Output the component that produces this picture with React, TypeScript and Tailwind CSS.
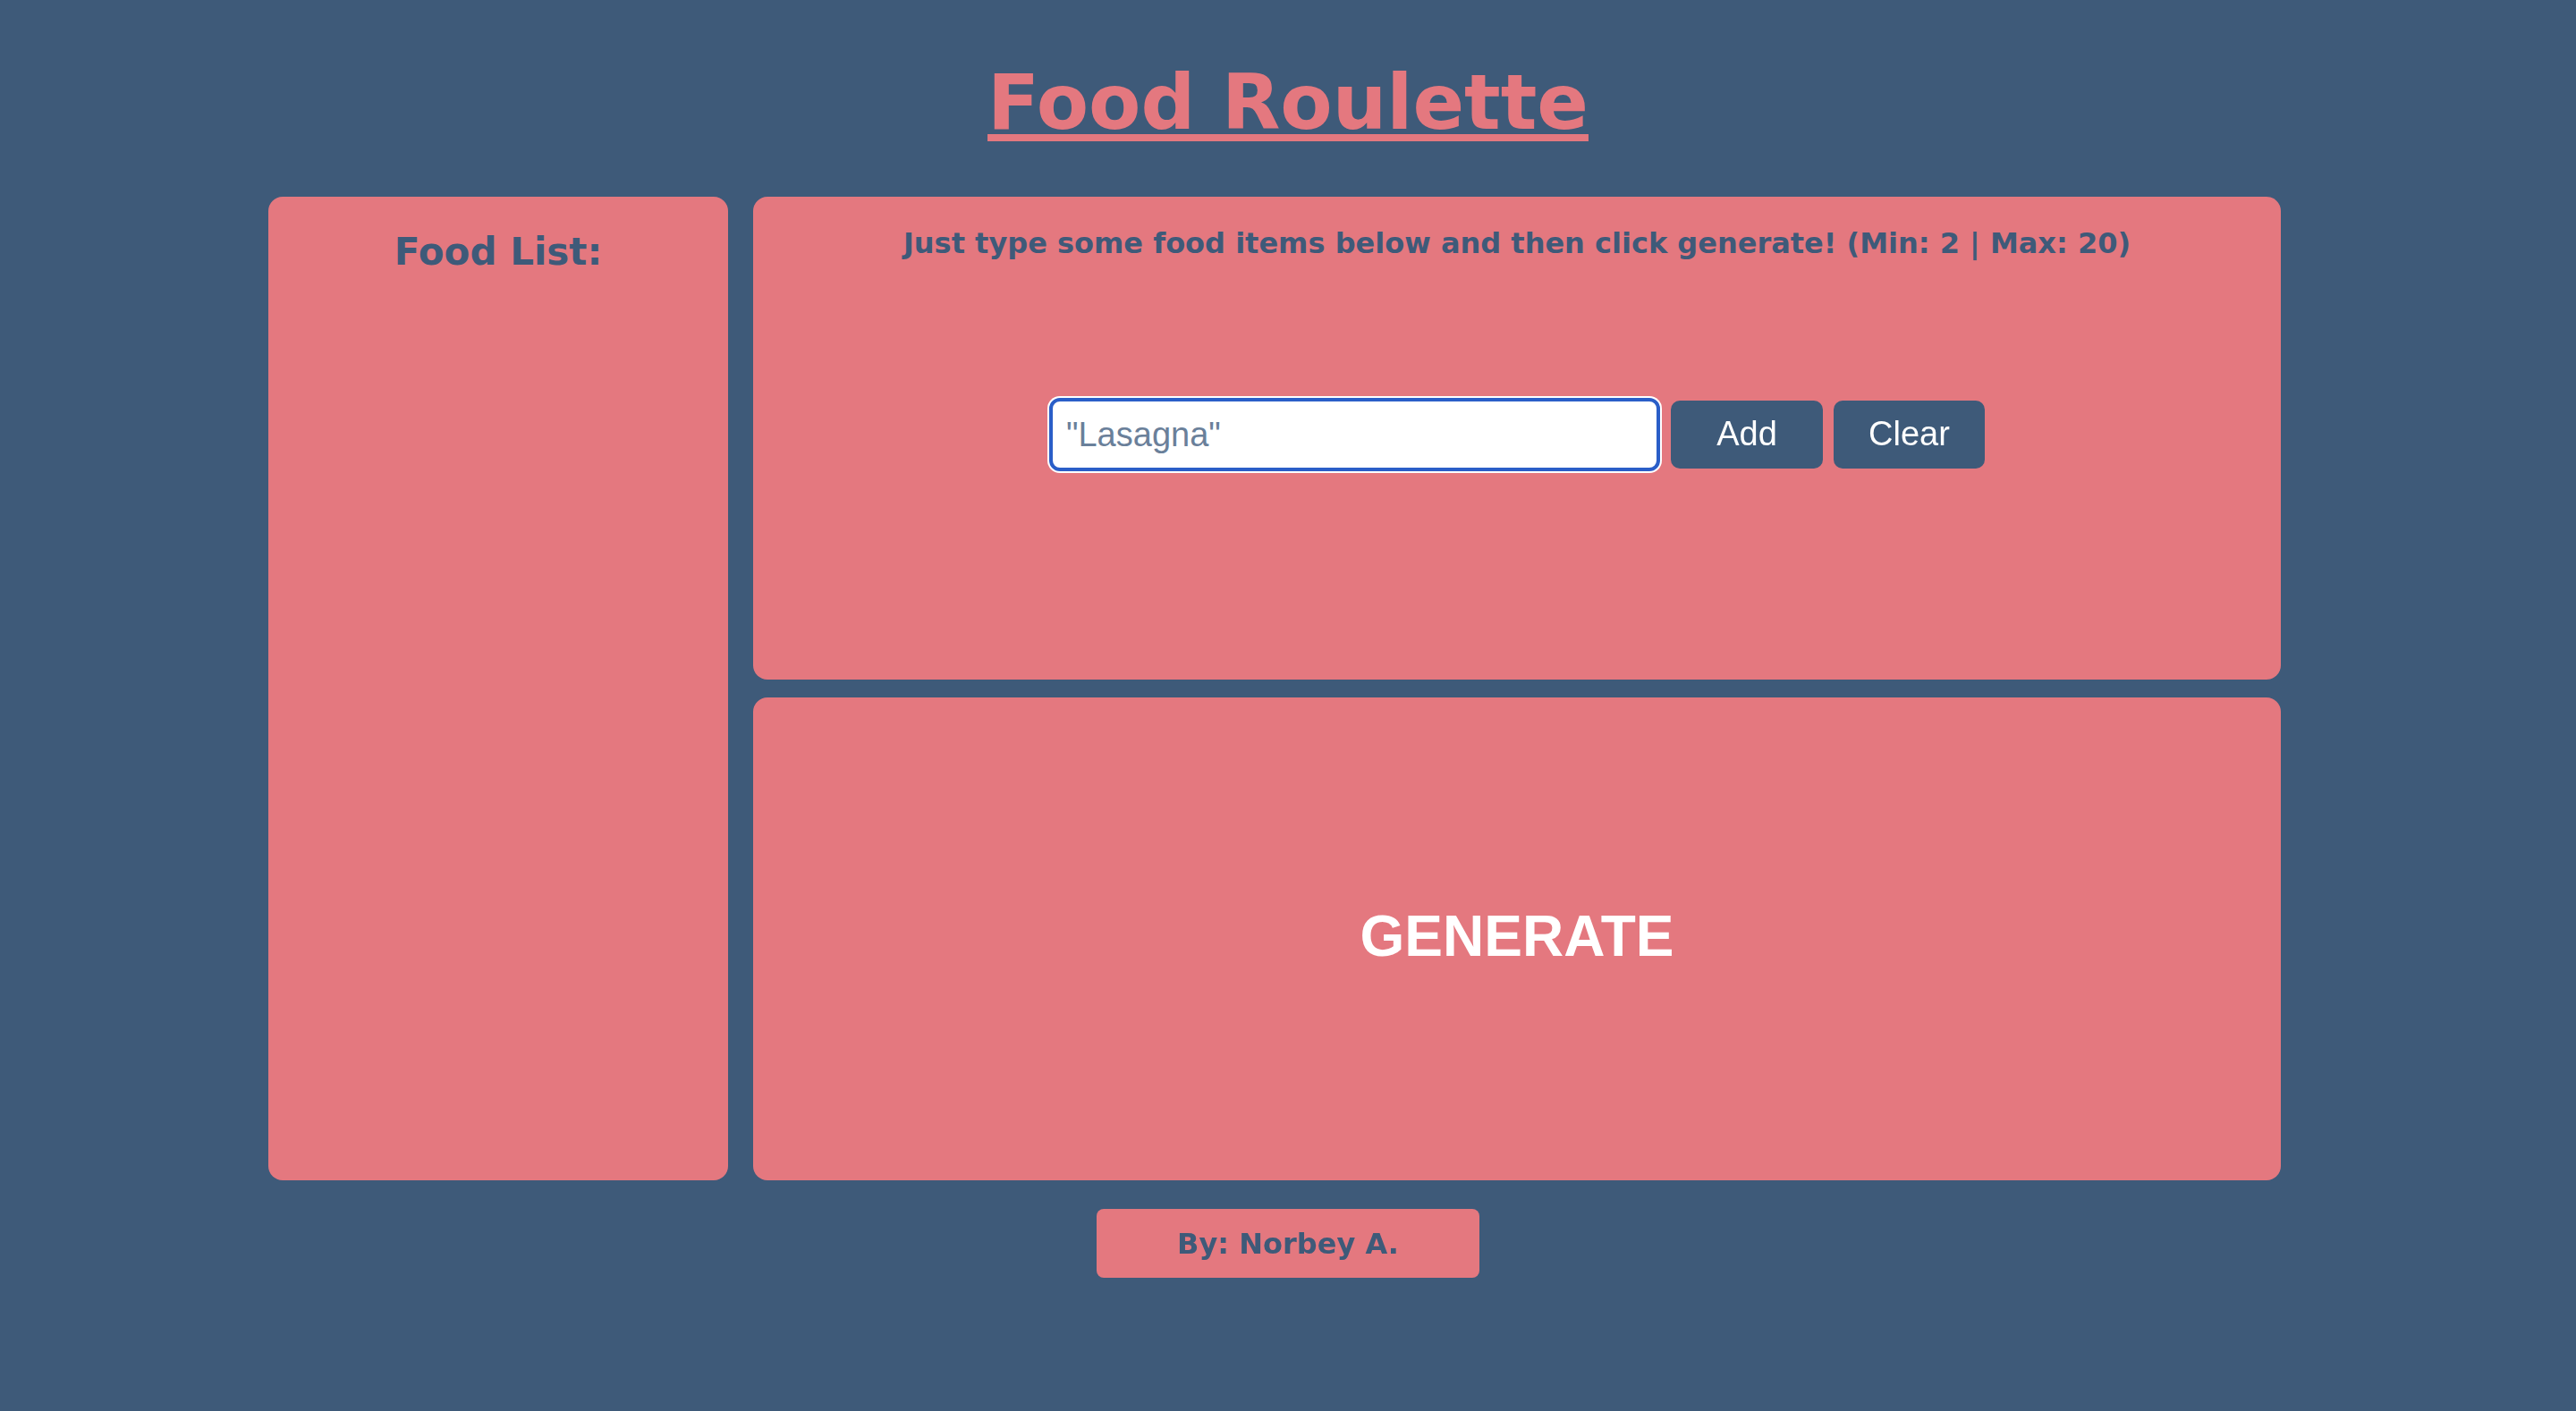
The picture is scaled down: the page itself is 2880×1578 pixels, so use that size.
import React, { useState } from "react";

const FoodRoulette = () => {
  const [food, setFood] = useState("");
  const [items, setItems] = useState<string[]>([]);
  const [picked, setPicked] = useState<string | null>(null);

  const addItem = () => {
    if (!food.trim() || items.length >= 20) return;
    setItems([...items, food.trim()]);
    setFood("");
  };

  const clearItems = () => {
    setItems([]);
    setPicked(null);
  };

  const generate = () => {
    if (items.length < 2) return;
    setPicked(items[Math.floor(Math.random() * items.length)]);
  };

  return (
    <div className="min-h-screen w-full bg-[#3e5a79] pt-[64px] font-['DejaVu_Sans',Verdana,sans-serif]">
      {/* Title */}
      <h1 className="text-center text-[85px] leading-[102px] font-bold text-[#e4787f] underline decoration-8 underline-offset-[6px]">
        Food Roulette
      </h1>

      {/* Main panels */}
      <div className="mt-[54px] ml-[300px] w-[2250px] flex gap-[28px]">
        <div className="w-[514px] h-[1100px] shrink-0 rounded-[16px] bg-[#e4787f] pt-[41px]">
          <h2 className="text-center text-[42px] leading-none font-bold text-[#3e5a79]">
            Food List:
          </h2>
          <ul className="mt-6 px-8 text-[30px] text-[#3e5a79] font-bold">
            {items.map((item, i) => (
              <li key={i} className="py-1">
                {item}
              </li>
            ))}
          </ul>
        </div>

        <div className="flex-1 flex flex-col gap-[20px]">
          <div className="h-[540px] rounded-[16px] bg-[#e4787f] pt-[36px] flex flex-col items-center">
            <p className="text-[32px] leading-none font-bold text-[#3e5a79]">
              Just type some food items below and then click generate! (Min: 2 | Max: 20)
            </p>
            <div className="mt-[157px] flex items-center gap-[12px] font-['Liberation_Sans',Arial,sans-serif]">
              <input
                type="text"
                autoFocus
                value={food}
                onChange={(e) => setFood(e.target.value)}
                placeholder={'"Lasagna"'}
                className="w-[683px] h-[82px] rounded-[12px] bg-white border-[4px] border-[#2a5ec8] px-[15px] text-[38px] text-[#3e5a79] placeholder:text-[#6a809a] outline-none ring-2 ring-white"
              />
              <button
                onClick={addItem}
                className="w-[170px] h-[76px] rounded-[10px] bg-[#3e5a79] text-white text-[38px] pb-[2px]"
              >
                Add
              </button>
              <button
                onClick={clearItems}
                className="w-[169px] h-[76px] rounded-[10px] bg-[#3e5a79] text-white text-[38px] pb-[2px]"
              >
                Clear
              </button>
            </div>
          </div>

          <button
            onClick={generate}
            className="h-[540px] rounded-[16px] bg-[#e4787f] flex items-center justify-center pb-[6px] font-['Liberation_Sans',Arial,sans-serif] text-[64px] font-bold text-white"
          >
            {picked ?? "GENERATE"}
          </button>
        </div>
      </div>

      {/* Footer */}
      <div className="mt-[32px] mx-auto w-[428px] h-[77px] rounded-[8px] bg-[#e4787f] flex items-center justify-center">
        <span className="text-[32px] font-bold text-[#3e5a79]">By: Norbey A.</span>
      </div>
    </div>
  );
};

export default function App() {
  return <FoodRoulette />;
}
